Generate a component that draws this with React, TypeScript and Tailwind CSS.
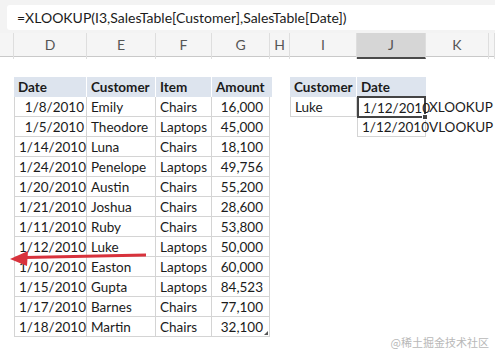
import React from "react";

type Row = [string, string, string, string];

const sales: Row[] = [
    ["1/8/2010", "Emily", "Chairs", "16,000"],
    ["1/5/2010", "Theodore", "Laptops", "45,000"],
    ["1/14/2010", "Luna", "Chairs", "18,100"],
    ["1/24/2010", "Penelope", "Laptops", "49,756"],
    ["1/20/2010", "Austin", "Chairs", "55,200"],
    ["1/21/2010", "Joshua", "Chairs", "28,600"],
    ["1/11/2010", "Ruby", "Chairs", "53,800"],
    ["1/12/2010", "Luke", "Laptops", "50,000"],
    ["1/10/2010", "Easton", "Laptops", "60,000"],
    ["1/15/2010", "Gupta", "Laptops", "84,523"],
    ["1/17/2010", "Barnes", "Chairs", "77,100"],
    ["1/18/2010", "Martin", "Chairs", "32,100"],
];

const cols = ["", "D", "E", "F", "G", "H", "I", "J", "K", ""];

const gridCols = "grid grid-cols-[14px_73px_69px_56px_58px_20px_67px_69px_63px_1fr]";

function Cell({ children, className = "" }: { children?: React.ReactNode; className?: string }) {
    return (
        <div className={`h-[20px] leading-[21px] px-[4px] whitespace-nowrap ${className}`}>
            {children}
        </div>
    );
}

export default function App() {
    return (
        <div className="relative w-[495px] h-[353px] overflow-hidden bg-white text-[13.5px] text-[#1b1b1b] font-['Lato',sans-serif]">

            {/* formula bar */}
            <div className="h-[33px] bg-[#f3f3f3] pl-[7px] pt-[5px]">
                <div className="h-[25px] bg-white rounded-l-[3px] pl-[10px] leading-[25px] text-[14px]">
                    =XLOOKUP(I3,SalesTable[Customer],SalesTable[Date])
                </div>
            </div>

            {/* column headers */}
            <div className={`${gridCols} h-[24px] bg-[#f5f5f5] border-b border-[#c9c9c9] text-[14px] text-[#555]`}>
                {cols.map((c, i) => (
                    <div
                        key={i}
                        className={`leading-[24px] text-center border-r border-[#dedede] ${c === "J" ? "bg-[#d6d6d6] border-b-2 border-b-[#4a4a4a]" : ""}`}
                    >
                        {c}
                    </div>
                ))}
            </div>

            {/* sheet */}
            <div className={gridCols}>
                {/* row 1 blank */}
                {cols.map((_, i) => <Cell key={"r1" + i} />)}

                {/* row 2 headers */}
                <Cell />
                <Cell className="bg-[#dde4ee] font-bold border-r border-white">Date</Cell>
                <Cell className="bg-[#dde4ee] font-bold border-r border-white">Customer</Cell>
                <Cell className="bg-[#dde4ee] font-bold border-r border-white">Item</Cell>
                <Cell className="bg-[#dde4ee] font-bold -mr-[2px]">Amount</Cell>
                <Cell />
                <Cell className="bg-[#dde4ee] font-bold border-r border-white">Customer</Cell>
                <Cell className="bg-[#dde4ee] font-bold">Date</Cell>
                <Cell />
                <Cell />

                {sales.map((r, idx) => (
                    <React.Fragment key={idx}>
                        <Cell />
                        <Cell className="text-right border-l border-b border-r border-[#d4d4d4] pr-[2px]">{r[0]}</Cell>
                        <Cell className="border-b border-r border-[#d4d4d4]">{r[1]}</Cell>
                        <Cell className="border-b border-r border-[#d4d4d4]">{r[2]}</Cell>
                        <Cell className="relative text-right border-b border-r border-[#d4d4d4] pr-[6px]">
                            {r[3]}
                            {idx === sales.length - 1 && (
                                <span className="absolute right-[1px] bottom-[1px] w-0 h-0 border-l-[4px] border-l-transparent border-b-[4px] border-b-[#555]" />
                            )}
                        </Cell>
                        <Cell />
                        {idx === 0 ? (
                            <>
                                <Cell className="border-l border-b border-r border-[#d4d4d4]">Luke</Cell>
                                <Cell className="relative text-right border-2 border-[#444] -my-[1px] h-[22px] leading-[19px] pr-[2px]">
                                    1/12/2010
                                    <span className="absolute -right-[4px] -bottom-[4px] w-[6px] h-[6px] bg-[#444] border border-white" />
                                </Cell>
                                <Cell className="pl-[3px]">XLOOKUP</Cell>
                            </>
                        ) : idx === 1 ? (
                            <>
                                <Cell />
                                <Cell className="text-right border-l border-b border-r border-[#d4d4d4] pr-[3px]">1/12/2010</Cell>
                                <Cell className="pl-[3px]">VLOOKUP</Cell>
                            </>
                        ) : (
                            <>
                                <Cell />
                                <Cell />
                                <Cell />
                            </>
                        )}
                        <Cell />
                    </React.Fragment>
                ))}
            </div>

            {/* red arrow annotation */}
            <svg className="absolute left-0 top-[244px]" width="160" height="30" viewBox="0 0 160 30">
                <line x1="146" y1="11" x2="25" y2="13.5" stroke="#d8323c" strokeWidth="2.8" />
                <polygon points="10,15 28,7 27,22" fill="#d8323c" />
            </svg>

            {/* watermark */}
            <div className="absolute right-[6px] bottom-[3px] text-[11px] text-[#b8b8b8] font-['Noto_Sans_CJK_SC',sans-serif]">
                @稀土掘金技术社区
            </div>
        </div>
    );
}
